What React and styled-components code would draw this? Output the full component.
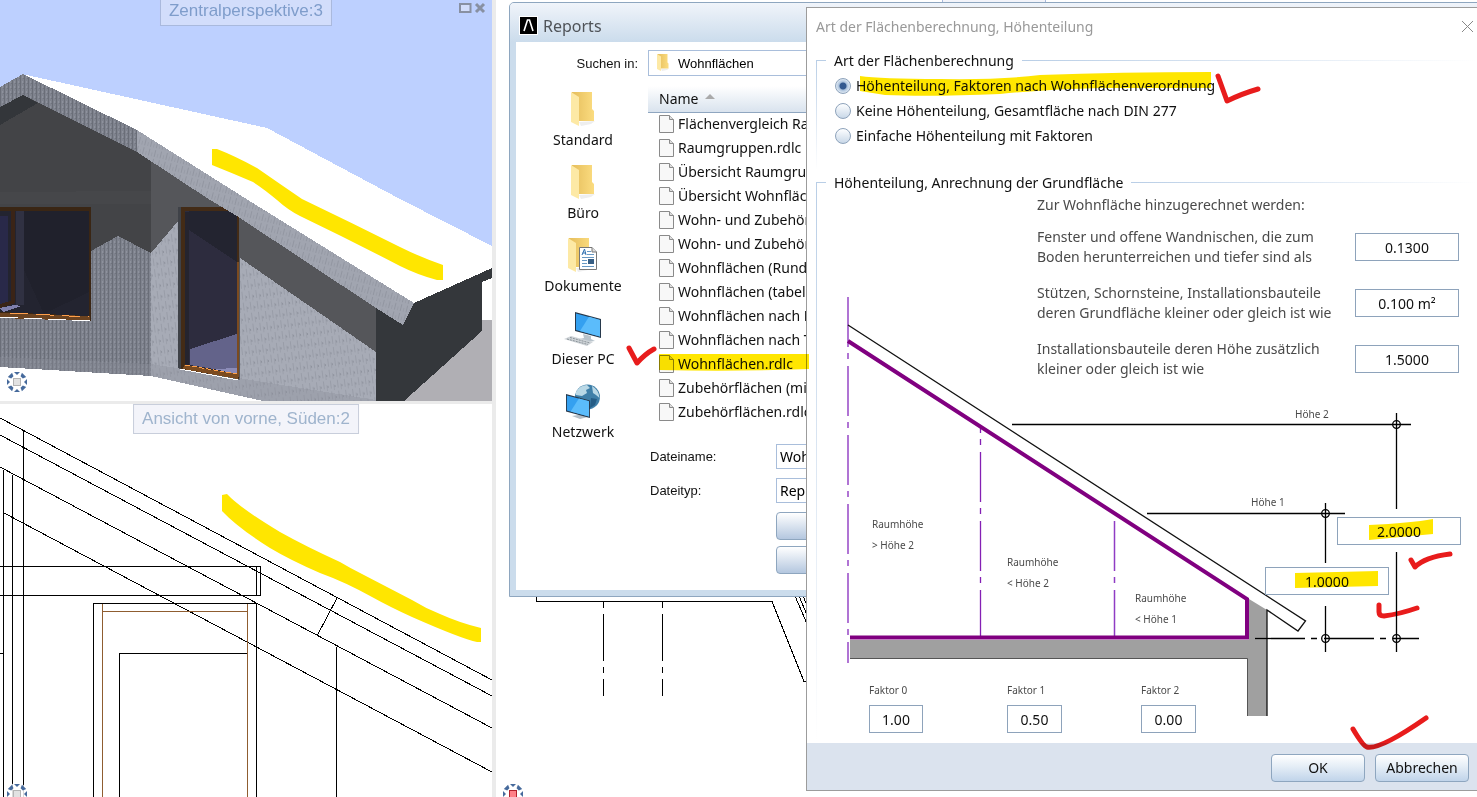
import React from 'react';
import styled, { createGlobalStyle } from 'styled-components';

const UI_FONT = '"Noto Sans", "Open Sans", sans-serif';
const PLAIN_FONT = '"Liberation Sans", Arial, sans-serif';

const GlobalStyle = createGlobalStyle`
  * {
    box-sizing: border-box;
  }
  body {
    margin: 0;
    overflow: hidden;
    font-family: ${UI_FONT};
    font-size: 14px;
    color: #111;
  }
`;

const Workspace = styled.main`
  position: relative;
  display: grid;
  grid-template-columns: 492fr 981fr;
  gap: 4px;
  height: 100vh;
  overflow: hidden;
  background: #ebebeb;
`;

const ViewColumn = styled.div`
  display: grid;
  grid-template-rows: 401fr 393fr;
  gap: 3px;
  min-height: 0;
`;

const Pane = styled.section`
  position: relative;
  overflow: hidden;
  min-height: 0;
  background: ${(p) => p.$bg || '#fff'};
`;

const Scene = styled.svg`
  display: block;
  width: 100%;
  height: 100%;
`;

const Caption = styled.h2`
  position: absolute;
  top: 0;
  left: 50%;
  transform: translateX(-50%);
  margin: 0;
  padding: 0 8px;
  border: 1px solid ${(p) => (p.$sky ? '#a9b9dd' : '#c8cedb')};
  border-top-width: ${(p) => (p.$sky ? 0 : 1)}px;
  background: ${(p) => (p.$sky ? '#d2ddfb' : '#f3f4fa')};
  color: ${(p) => (p.$sky ? '#7f9dcb' : '#9fb4cd')};
  font: 400 17px/${(p) => (p.$sky ? 22 : 28)}px ${PLAIN_FONT};
  padding-bottom: ${(p) => (p.$sky ? 3 : 0)}px;
  white-space: nowrap;
`;

const PaneControls = styled.div`
  position: absolute;
  top: 2px;
  right: 6px;
  display: flex;
  gap: 2px;
`;

const PaneButton = styled.button`
  display: flex;
  padding: 0;
  border: 0;
  background: none;
`;

const NavBadge = styled.svg`
  position: absolute;
  left: ${(p) => p.$left}px;
  bottom: ${(p) => p.$bottom}px;
`;

/* ---------- reports window ---------- */

const ReportsWindow = styled.section`
  position: absolute;
  top: 2px;
  left: 13px;
  right: -12px;
  padding: 0 6px 6px;
  border: 1px solid #8ea6bf;
  border-radius: 5px 5px 0 0;
  background: #cbdcec;
`;

const ReportsTitle = styled.header`
  display: flex;
  align-items: center;
  gap: 5px;
  height: 39px;
  margin: 0 -6px;
  padding: 6px 9px 0;
  border-radius: 4px 4px 0 0;
  background: linear-gradient(#f0f4fa, #cbdcec);
  color: #4f5358;
  font-size: 16px;
`;

const ReportsBody = styled.div`
  display: grid;
  grid-template-columns: 132px 1fr;
  grid-template-rows: 28px 1fr;
  min-height: 548px;
  padding-top: 8px;
  background: #fff;
  font-family: ${PLAIN_FONT};
  font-size: 13px;
`;

const SearchLabel = styled.label`
  padding-right: 10px;
  line-height: 28px;
  text-align: right;
`;

const SearchBox = styled.button`
  display: flex;
  align-items: center;
  gap: 9px;
  height: 26px;
  padding: 0 8px;
  border: 1px solid #a9bedb;
  background: #fff;
  color: #000;
  font: 13px ${PLAIN_FONT};
`;

const Places = styled.nav`
  display: flex;
  flex-direction: column;
  align-items: center;
  gap: 12px;
  padding: 14px 0 0 2px;
`;

const Place = styled.a`
  display: flex;
  flex-direction: column;
  align-items: center;
  height: 61px;
  color: #111;
  font: 14px/22px ${UI_FONT};
  text-decoration: none;

  svg {
    margin-bottom: 1px;
  }
`;

const Files = styled.table`
  width: 100%;
  margin-top: 8px;
  border-collapse: collapse;
  font: 14px ${UI_FONT};

  th {
    height: 26px;
    padding: 0 11px;
    border-bottom: 1px solid #8fa6c0;
    background: linear-gradient(#fff, #d9e3ee);
    font-weight: 400;
    line-height: 20px;
    text-align: left;
  }
  th svg {
    margin: 0 0 5px 7px;
  }
  td {
    height: 24px;
    padding: 0 11px;
    line-height: 20px;
  }
`;

const FileName = styled.span`
  display: flex;
  align-items: center;
  gap: 4px;
  white-space: nowrap;
`;

const FileForm = styled.form`
  display: grid;
  grid-template-columns: 126px 1fr;
  row-gap: 9px;
  align-items: center;
  margin-top: 20px;
  padding-left: 2px;

  input,
  select {
    height: 25px;
    padding: 0 3px;
    border: 1px solid #a9bedb;
    background: #fff;
    color: #000;
    font: 14px ${UI_FONT};
    appearance: none;
  }
`;

const FormActions = styled.div`
  grid-column: 2;
  display: flex;
  flex-direction: column;
  gap: 6px;
`;

const Button = styled.button`
  width: ${(p) => p.$width || '94px'};
  height: 28px;
  padding: 0;
  border: 1px solid #8ea6bf;
  border-radius: 4px;
  background: linear-gradient(${(p) => p.$tone || '#fff, #e4edf6 45%, #c0d4ea'});
  color: #111;
  font: 14px ${UI_FONT};
`;

/* ---------- area calculation dialog ---------- */

const AreaDialog = styled.section`
  position: absolute;
  top: 7px;
  left: 310px;
  right: 0;
  border: 1px solid #9c9c9c;
  border-right: 0;
  background: #fff;
`;

const DialogTitle = styled.header`
  display: flex;
  align-items: center;
  justify-content: space-between;
  height: 40px;
  padding: 0 3px 4px 9px;
  color: #999;
`;

const Group = styled.fieldset`
  min-width: 0;
  margin: 0 0 0 9px;
  padding: 0 0 ${(p) => p.$bottom || 0}px;
  border: 0;
  background: linear-gradient(#b9cee6, #fff) 0 0 / 1px 100% no-repeat;
`;

const GroupHead = styled.legend`
  display: flex;
  align-items: center;
  gap: 8px;
  width: 100%;
  height: 25px;
  padding: 0;

  &::before,
  &::after {
    content: '';
    width: 10px;
    height: 1px;
    background: #b9cee6;
  }
  &::after {
    flex: 1;
    background: linear-gradient(90deg, #b9cee6, #fff);
  }
`;

const Option = styled.label`
  display: flex;
  align-items: center;
  gap: 5px;
  height: 25px;
  padding-left: 19px;
`;

const Radio = styled.input`
  appearance: none;
  width: 16px;
  height: 16px;
  margin: 0;
  border: 1px solid #8ea3bb;
  border-radius: 50%;
  background: linear-gradient(#fdfeff, #c9d8e8);

  &:checked {
    background: radial-gradient(circle, #33598f 0 3px, #a9c0db 4px, #e0eaf4 7px);
  }
`;

const Sheet = styled.div`
  position: relative;
  display: grid;
  min-height: 548px;

  > * {
    grid-area: 1 / 1;
  }
`;

const Section = styled.svg`
  width: 661px;
  height: 548px;

  text {
    fill: #4a4a4a;
    font: 10px ${UI_FONT};
  }
`;

const Additions = styled.div`
  position: relative;
  align-self: start;
  width: 422px;
  margin-left: 221px;
  color: #4a4a4a;
  line-height: 20px;
`;

const AdditionRow = styled.label`
  display: flex;
  align-items: center;
  justify-content: space-between;
  height: 56px;
  white-space: pre;
`;

const AdditionsHead = styled.p`
  height: 24px;
  margin: 0;
`;

const Value = styled.input`
  width: ${(p) => p.$width}px;
  height: 28px;
  padding: 0;
  border: 1px solid #8ea3bb;
  background: #fff;
  color: #111;
  font: 14px ${UI_FONT};
  text-align: center;
`;

const HeightValue = styled(Value)`
  position: absolute;
  left: ${(p) => p.$x}px;
  top: ${(p) => p.$y}px;
`;

const Factors = styled.div`
  position: relative;
  align-self: end;
  display: grid;
  grid-template-columns: 138px 134px 56px;
  margin: 0 0 10px 53px;
`;

const Factor = styled.label`
  display: flex;
  flex-direction: column;
  color: #4a4a4a;
  font-size: 10px;
  line-height: 30px;
`;

const DialogFooter = styled.footer`
  display: flex;
  align-items: center;
  justify-content: flex-end;
  gap: 10px;
  height: 47px;
  padding: 2px 8px 0;
  background: #dbe3ee;
`;

const Markup = styled.svg`
  position: absolute;
  top: 0;
  left: 0;
  width: 1477px;
  height: 797px;
  pointer-events: none;
  mix-blend-mode: multiply;
`;

/* ---------- icons ---------- */

function NavIcon({ left, bottom, active }) {
  return (
    <NavBadge $left={left} $bottom={bottom} width="22" height="22" viewBox="0 0 22 22">
      <circle cx="11" cy="11" r="11" fill="#fff" opacity=".85" />
      {[0, 45, 90, 135, 180, 225, 270, 315].map((a) => (
        <path key={a} d={a % 90 ? 'M8 1L14 1L12.6 4.4L9.4 4.4Z' : 'M8 1L14 1L11 4Z'} fill="#466a9c" transform={`rotate(${a} 11 11)`} />
      ))}
      <rect x="7.5" y="7.5" width="7" height="7" fill={active ? '#ff8088' : '#e2e2e2'} stroke={active ? '#b3202c' : '#b4b4b4'} />
    </NavBadge>
  );
}

function FolderIcon({ size = 24, doc }) {
  return (
    <svg width={doc ? 30 : size} height={(size * 36) / 24} viewBox={doc ? '0 0 30 36' : '0 0 24 36'}>
      <defs>
        <linearGradient id="folderBack" x1="0" x2="1">
          <stop offset="0" stopColor="#e6be5c" />
          <stop offset="1" stopColor="#fbdc80" />
        </linearGradient>
      </defs>
      <path d="M8 30L24 29L20 32L10 34Z" fill="#eee" />
      <path d="M1 0H21V17L23 19V29H8L1 30Z" fill="url(#folderBack)" />
      <path d="M0 0L8 5V34L0 30Z" fill="#fde9a5" />
      {doc && (
        <g>
          <path d="M11.5 9.5H24L28.5 14V31.5H11.5Z" fill="#fff" stroke="#777" />
          <path d="M24 9.5V14H28.5" fill="#ddd" stroke="#777" />
          <path d="M14 17L16.5 11L18 17M14.5 15H18" fill="none" stroke="#2c6fb0" />
          <path d="M19 13.5H23M19 16.5H26M14 19.5H26M14 22.5H19M14 25.5H19M14 28.5H26" stroke="#6899c4" />
          <rect x="20" y="21" width="6" height="5" fill="#375e84" />
        </g>
      )}
    </svg>
  );
}

function Screen() {
  return (
    <g>
      <path d="M0 0L26 7V26L0 19Z" fill="#27394c" />
      <path d="M1 1.500L25 8V24.500L1 18Z" fill="#34a0f0" />
      <path d="M14 4.800L25 8V24.500L5 19Z" fill="#5bbcfb" />
    </g>
  );
}

function ComputerIcon() {
  return (
    <svg width="38" height="36" viewBox="0 0 38 36">
      <path d="M19 23L27 25V28L31 30L23 31L15 28L20 27Z" fill="#b9c4cc" />
      <g transform="translate(11 1)"><Screen /></g>
      <path d="M0 28L7 25L29 31L23 35Z" fill="#cfd4d8" />
      <path d="M3 28L24 33.500M6 26.500L26 32" stroke="#8c949a" strokeDasharray="2 1" />
    </svg>
  );
}

function NetworkIcon() {
  return (
    <svg width="36" height="36" viewBox="0 0 36 36">
      <circle cx="22.500" cy="13" r="12.500" fill="#3f7fa8" />
      <path d="M11 8Q15 1 22 1L25 4L21 6L22 9L17 12L11 11ZM27 2Q34 6 34.500 14L31 11L28 9Z" fill="#b9d8e6" />
      <path d="M26 14L32 15L30 21L25 24Z" fill="#255d86" />
      <path d="M14 28L20 29V32L23 33L15 35L7 32L13 31Z" fill="#b4bec6" />
      <g transform="translate(1 10) scale(.92)"><Screen /></g>
    </svg>
  );
}

function SheetIcon() {
  return (
    <svg width="15" height="18" viewBox="0 0 15 18">
      <path d="M.5 .5H10.500L14.500 4.500V17.500H.5Z" fill="#f8f8f8" stroke="#8a8a8a" />
      <path d="M10.500 .5V4.500H14.500" fill="#ddd" stroke="#8a8a8a" />
    </svg>
  );
}

/* ---------- drawings ---------- */

function HouseView() {
  return (
    <Scene viewBox="0 0 492 401" preserveAspectRatio="xMinYMin slice" shapeRendering="crispEdges">
      <defs>
        <pattern id="ribs" width="4" height="5" patternUnits="userSpaceOnUse">
          <rect width="4" height="5" fill="#7f838e" />
          <rect width="1" height="5" fill="#6a6e78" />
          <rect x="2" y="1" width="1" height="2" fill="#8e929d" />
          <rect x="3" y="3" width="1" height="1" fill="#6f737d" />
        </pattern>
        <pattern id="plaster" width="7" height="11" patternUnits="userSpaceOnUse" patternTransform="rotate(-7)">
          <rect width="7" height="11" fill="#a7abb6" />
          <rect x="1" width="1" height="8" fill="#999da8" />
          <rect x="4" y="4" width="1" height="6" fill="#9ca0ab" />
          <rect x="5" y="5" width="1" height="2" fill="#8f939e" />
        </pattern>
        <pattern id="fascia" width="6" height="9" patternUnits="userSpaceOnUse" patternTransform="rotate(14)">
          <rect width="6" height="9" fill="#a1a5b0" />
          <rect x="1" width="1" height="7" fill="#9296a1" />
          <rect x="4" y="3" width="1" height="4" fill="#989ca7" />
        </pattern>
      </defs>
      <rect width="492" height="401" fill="#bdd0ff" />
      <rect y="300" width="492" height="101" fill="#fff" />
      <rect x="482" y="278" width="10" height="42" fill="#fff" />
      <path d="M482 320H492V401H400V390Z" fill="#b0afb4" />
      <path d="M22 74L267 128L400 199L492 246V269L414 304L137 131Z" fill="#fff" />
      <path d="M0 107L23 95L137 152L151 161V376L0 367Z" fill="#434447" />
      <path d="M0 107L23 95L38 103L0 125Z" fill="#33363a" />
      <path d="M0 192L151 191V204H0Z" fill="#46474a" />
      <path d="M151 160L237 214L376 308V401H263L151 376Z" fill="#55565a" />
      <path d="M91 251L118 236L151 253V376L0 367V317L91 321Z" fill="url(#ribs)" />
      <path d="M151 253L179 220V369L240 380V258L376 352V401H263L151 376Z" fill="url(#plaster)" />
      <path d="M0 357L151 364L376 400V401H263L151 376L0 367Z" fill="#8b8f9a" opacity=".35" />
      <path d="M376 308L403 325L414 303L492 268V278L482 282V331L404 401H376Z" fill="#34373b" />
      {/* window */}
      <path d="M0 207H91V321L0 317Z" fill="#3a2614" />
      <path d="M0 211H89V316L0 312Z" fill="#232430" />
      <path d="M24 211H89V292L44 314L24 270Z" fill="#20212c" />
      <path d="M0 216H8V303L0 305Z" fill="#292949" />
      <path d="M11 211H15V303L0 308V304L11 301Z" fill="#3a2417" />
      <path d="M16 211H24V305H16Z" fill="#303142" />
      <path d="M0 308L14 305L22 306L3 312Z" fill="#8080ad" />
      <path d="M0 313L90 316V321L0 318Z" fill="#6b4320" />
      <path d="M10 313L89 317" stroke="#ff9f4a" strokeDasharray="18 8" />
      <path d="M0 317L90 321" stroke="#fff" strokeDasharray="18 6" />
      {/* door */}
      <path d="M178 207H182V369L178 368Z" fill="#3f4248" />
      <path d="M181 207H239V379L181 369Z" fill="#432b16" />
      <path d="M185 211H237V374L185 366Z" fill="#2d2c3e" />
      <path d="M185 211H237V262L189 230V211Z" fill="#232430" />
      <path d="M185 212H189V365L185 364Z" fill="#25242f" />
      <path d="M190 349L237 334V373L190 365Z" fill="#63638a" />
      <path d="M214 369L237 368V374Z" fill="#8b8bb8" />
      <path d="M237 262H239V377H237Z" fill="#7b4b20" />
      <path d="M184 365L238 374V379L183 369Z" fill="#7b4b20" />
      <path d="M185 365L237 374" stroke="#ffa04a" strokeDasharray="5 2" />
      <path d="M180 369L238 380" stroke="#fff" />
      {/* gable fascia */}
      <path d="M0 87L23 74L137 130V152L23 95L0 107Z" fill="url(#ribs)" />
      <path d="M137 130L248 200L414 303L403 325L376 308L237 216L210 200L137 152Z" fill="url(#fascia)" />
    </Scene>
  );
}

function ElevationView() {
  return (
    <Scene viewBox="0 404 492 393" preserveAspectRatio="xMinYMin slice" shapeRendering="crispEdges" fill="none" stroke="#000">
      <path d="M0 418L492 680M0 435L492 696M0 467L492 728M4 513L492 772M337 598L317 636" />
      <path d="M3.500 470V797M12.500 475V797M23.500 431V797M336.500 647V797" />
      <path d="M0 566.500H260.500V595.500H0M256.500 566V595M0 653.500H3" />
      <path d="M93.500 797V603.500H256.500V797M119.500 797V653.500H247" />
      <path d="M102.500 604V797M247.500 604V797M102 611.500H247" stroke="#8f5d30" />
    </Scene>
  );
}

function PlanView() {
  return (
    <Scene viewBox="496 0 981 797" preserveAspectRatio="xMinYMin slice" shapeRendering="crispEdges" fill="none" stroke="#000">
      <rect x="943" y="0" width="102" height="2" fill="#f3f4fa" stroke="none" />
      <path d="M942.500 0V2M1045.500 0V2" stroke="#a9b9dd" />
      <path d="M536.500 590V601.500H772L804 681.500H812" />
      <path d="M603.500 602V608M603.500 614V661M603.500 667V673M603.500 679V696" />
      <path d="M662.500 602V608M662.500 614V661M662.500 667V673M662.500 679V696" />
      <path d="M795 596L808 626M799 596L810 622M803 596L814 622" />
    </Scene>
  );
}

function RoofSection() {
  return (
    <Section viewBox="816 195 661 548" fill="none">
      <path d="M850 640H1249V599L1267 610V716H1247V659H850Z" fill="#a0a0a0" />
      <path d="M850 658.500H1247.500V716" stroke="#555" />
      <path d="M848 297V663" stroke="#b074d4" strokeWidth="2" strokeDasharray="50 6 6 7" />
      <path d="M980.500 427V638" stroke="#8420b4" strokeWidth="1.300" strokeDasharray="50 6 6 7" strokeDashoffset="44" />
      <path d="M1114.500 521V638" stroke="#8f3cc4" strokeWidth="1.500" strokeDasharray="50 6 6 7" />
      <path d="M850 637.500H1247V599L848 341" stroke="#800080" strokeWidth="4" />
      <path d="M848 325L1305.500 621L1298 631L1267 610V716" stroke="#111" strokeWidth="1.300" />
      <g stroke="#000" strokeWidth="1.300">
        <path d="M1012 424.500H1411M1147 513.500H1345" />
        <path d="M1396.500 413V509M1396.500 552V652M1325.500 503V563M1325.500 606V652" />
        <path d="M1255 638.500H1419" strokeDasharray="50 6 6 7" />
        <circle cx="1396.500" cy="424.500" r="3.800" />
        <circle cx="1325.500" cy="513.500" r="3.800" />
        <circle cx="1325.500" cy="638.500" r="3.800" />
        <circle cx="1396.500" cy="638.500" r="3.800" />
      </g>
      <text x="1295" y="418">Höhe 2</text>
      <text x="1251" y="506">Höhe 1</text>
      <text x="872" y="528">Raumhöhe</text>
      <text x="872" y="549">&gt; Höhe 2</text>
      <text x="1007" y="566">Raumhöhe</text>
      <text x="1007" y="587">&lt; Höhe 2</text>
      <text x="1135" y="602">Raumhöhe</text>
      <text x="1135" y="623">&lt; Höhe 1</text>
    </Section>
  );
}

function MarkerStrokes() {
  return (
    <Markup viewBox="0 0 1477 797">
      <g fill="#ffe600">
        <path d="M212 149H217Q235 156 257 168Q280 184 302 199Q350 222 400 247Q420 257 443 265V280H437Q418 275 400 266Q350 240 300 216Q288 210 277 200Q264 189 253 182Q232 173 212 165Z" />
        <path d="M222 495L227 494Q240 508 280 532Q305 546 340 562Q350 568 362 574L412 600Q425 608 440 614Q460 623 481 628V642H477Q462 639 412 617Q390 607 372 597Q345 582 320 573Q290 560 270 548Q238 528 222 511Z" />
        <path d="M659 354H809V369Q730 372 659 370Z" />
        <path d="M860 76Q880 79 940 79Q1000 80 1040 75Q1120 72 1211 72V88H1100Q1050 89 1000 94Q930 97 885 95L860 91Z" />
        <path d="M1369 525Q1410 523 1433 519V534L1369 540Z" />
        <path d="M1295 573L1378 571V586L1295 588Z" />
      </g>
      <g fill="none" stroke="#e81c1c" strokeWidth="5" strokeLinecap="round" strokeLinejoin="round">
        <path d="M1218 76L1227 101Q1241 94 1258 89" />
        <path d="M629 348L637 363Q645 354 654 349" />
        <path d="M1411 560L1415 567Q1425 557 1450 554" />
        <path d="M1379 605V612Q1379 616 1384 616Q1400 614 1417 608" />
        <path d="M1353 729Q1363 746 1367 747Q1380 750 1426 718" />
      </g>
    </Markup>
  );
}

/* ---------- content ---------- */

const places = [
  { name: 'Standard', icon: <FolderIcon /> },
  { name: 'Büro', icon: <FolderIcon /> },
  { name: 'Dokumente', icon: <FolderIcon doc /> },
  { name: 'Dieser PC', icon: <ComputerIcon /> },
  { name: 'Netzwerk', icon: <NetworkIcon /> },
];

const files = [
  'Flächenvergleich Rau',
  'Raumgruppen.rdlc',
  'Übersicht Raumgrup',
  'Übersicht Wohnfläch',
  'Wohn- und Zubehör',
  'Wohn- und Zubehör',
  'Wohnflächen (Rund',
  'Wohnflächen (tabell',
  'Wohnflächen nach B',
  'Wohnflächen nach T',
  'Wohnflächen.rdlc',
  'Zubehörflächen (mit',
  'Zubehörflächen.rdlc',
];

const options = [
  'Höhenteilung, Faktoren nach Wohnflächenverordnung',
  'Keine Höhenteilung, Gesamtfläche nach DIN 277',
  'Einfache Höhenteilung mit Faktoren',
];

const additions = [
  { text: 'Fenster und offene Wandnischen, die zum\nBoden herunterreichen und tiefer sind als', value: '0.1300' },
  { text: 'Stützen, Schornsteine, Installationsbauteile\nderen Grundfläche kleiner oder gleich ist wie', value: '0.100 m²' },
  { text: 'Installationsbauteile deren Höhe zusätzlich\nkleiner oder gleich ist wie', value: '1.5000' },
];

const factors = ['1.00', '0.50', '0.00'];

function Reports() {
  return (
    <ReportsWindow>
      <ReportsTitle>
        <svg width="19" height="19" viewBox="0 0 19 19">
          <rect width="19" height="19" fill="#fff" />
          <rect x="1" y="1" width="17" height="17" fill="#000" />
          <path d="M5 15L8.500 4H10.500L14 15" fill="none" stroke="#fff" strokeWidth="1.600" />
        </svg>
        Reports
      </ReportsTitle>
      <ReportsBody>
        <SearchLabel htmlFor="folder">Suchen in:</SearchLabel>
        <SearchBox id="folder" type="button">
          <FolderIcon size={12} />
          Wohnflächen
        </SearchBox>
        <Places>
          {places.map((p) => (
            <Place key={p.name} href="#">
              {p.icon}
              {p.name}
            </Place>
          ))}
        </Places>
        <div>
          <Files>
            <thead>
              <tr>
                <th>
                  Name
                  <svg width="10" height="5" viewBox="0 0 10 5"><path d="M0 5L5 0L10 5Z" fill="#aaa" /></svg>
                </th>
              </tr>
            </thead>
            <tbody>
              {files.map((f, i) => (
                <tr key={i}>
                  <td><FileName><SheetIcon />{f}</FileName></td>
                </tr>
              ))}
            </tbody>
          </Files>
          <FileForm>
            <label htmlFor="fileName">Dateiname:</label>
            <input id="fileName" defaultValue="Wohnflächen.rdlc" />
            <label htmlFor="fileType">Dateityp:</label>
            <select id="fileType"><option>Report</option></select>
            <FormActions>
              <Button type="button" aria-label="Öffnen" $width="120px" $tone="#fff, #b4c7df" />
              <Button type="button" aria-label="Abbrechen" $width="120px" $tone="#fff, #b4c7df" />
            </FormActions>
          </FileForm>
        </div>
      </ReportsBody>
    </ReportsWindow>
  );
}

function AreaSettings() {
  return (
    <AreaDialog>
      <DialogTitle>
        Art der Flächenberechnung, Höhenteilung
        <PaneButton aria-label="Schließen">
          <svg width="13" height="13" viewBox="0 0 13 13"><path d="M1 1L12 12M12 1L1 12" stroke="#888" /></svg>
        </PaneButton>
      </DialogTitle>
      <Group $bottom={22}>
        <GroupHead>Art der Flächenberechnung</GroupHead>
        {options.map((o, i) => (
          <Option key={o}>
            <Radio type="radio" name="method" defaultChecked={i === 0} />
            {o}
          </Option>
        ))}
      </Group>
      <Group>
        <GroupHead>Höhenteilung, Anrechnung der Grundfläche</GroupHead>
        <Sheet>
          <RoofSection />
          <Additions>
            <AdditionsHead>Zur Wohnfläche hinzugerechnet werden:</AdditionsHead>
            {additions.map((a) => (
              <AdditionRow key={a.value}>
                {a.text}
                <Value $width={104} defaultValue={a.value} />
              </AdditionRow>
            ))}
          </Additions>
          <Factors>
            {factors.map((f, i) => (
              <Factor key={f}>
                Faktor {i}
                <Value $width={i ? 55 : 54} defaultValue={f} />
              </Factor>
            ))}
          </Factors>
          <HeightValue aria-label="Höhe 2" $width={124} $x={521} $y={322} defaultValue="2.0000" />
          <HeightValue aria-label="Höhe 1" $width={124} $x={449} $y={372} defaultValue="1.0000" />
        </Sheet>
      </Group>
      <DialogFooter>
        <Button type="button">OK</Button>
        <Button type="button">Abbrechen</Button>
      </DialogFooter>
    </AreaDialog>
  );
}

function App() {
  return (
    <>
      <GlobalStyle />
      <Workspace>
        <ViewColumn>
          <Pane $bg="#bdd0ff">
            <HouseView />
            <Caption $sky>Zentralperspektive:3</Caption>
            <PaneControls>
              <PaneButton aria-label="Maximieren">
                <svg width="13" height="12" viewBox="0 0 13 12"><rect x="1" y="2" width="10.500" height="8" fill="#d2ddfb" stroke="#8890a2" strokeWidth="2" /></svg>
              </PaneButton>
              <PaneButton aria-label="Ansicht schließen">
                <svg width="12" height="12" viewBox="0 0 12 12"><path d="M2 2L10 10M10 2L2 10" stroke="#8890a2" strokeWidth="3" /></svg>
              </PaneButton>
            </PaneControls>
            <NavIcon left={6} bottom={8} />
          </Pane>
          <Pane>
            <ElevationView />
            <Caption>Ansicht von vorne, Süden:2</Caption>
            <NavIcon left={6} bottom={-8} />
          </Pane>
        </ViewColumn>
        <Pane>
          <PlanView />
          <NavIcon left={6} bottom={-8} active />
          <Reports />
          <AreaSettings />
        </Pane>
        <MarkerStrokes />
      </Workspace>
    </>
  );
}

export default App;
